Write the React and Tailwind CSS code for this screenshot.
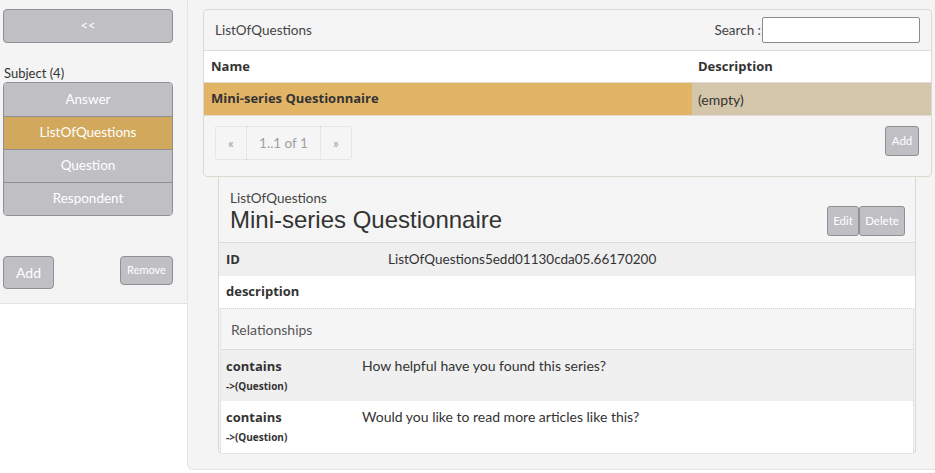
import React from 'react';

const font = "font-['Lato','Open_Sans',sans-serif]";
const bold = "font-['Open_Sans',sans-serif] font-bold";

const subjects = ['Answer', 'ListOfQuestions', 'Question', 'Respondent'];

const relations = [
  { text: 'How helpful have you found this series?', bg: 'bg-[#f0f0f0]' },
  { text: 'Would you like to read more articles like this?', bg: 'bg-white' },
];

export default function App() {
  return (
    <div className={`flex w-[935px] h-[473px] bg-white text-[#333] ${font}`}>
      {/* Sidebar */}
      <div className="w-[187px] shrink-0">
        <div className="h-[304px] bg-[#f4f4f4] border-b border-dotted border-[#d6d6d6] pt-[9px] pl-[3px] pr-[14px]">
          <button className="w-[170px] h-[34px] bg-[#c0bfc4] border border-[#8f8f95] rounded-[4px] text-white text-[13px]">
            &lt;&lt;
          </button>
          <div className="mt-[22px] text-[13px] leading-[16px] text-[#333] pl-[1px]">Subject (4)</div>
          <div className="mt-[1px] w-[170px] border border-[#8f8f95] rounded-[4px] overflow-hidden">
            {subjects.map((s, i) => (
              <div
                key={s}
                className={`h-[33px] flex items-center justify-center text-white text-[13.5px] pb-[1px] ${
                  s === 'ListOfQuestions' ? 'bg-[#d2a85c]' : 'bg-[#c0bfc4]'
                } ${i > 0 ? 'border-t border-[#8f8f95]' : ''}`}
              >
                {s}
              </div>
            ))}
          </div>
          <div className="mt-[40px] flex items-start justify-between">
            <button className="w-[51px] h-[33px] bg-[#c0bfc4] border border-[#8f8f95] rounded-[4px] text-white text-[14px]">
              Add
            </button>
            <button className="w-[53px] h-[29px] bg-[#c0bfc4] border border-[#8f8f95] rounded-[4px] text-white text-[11px]">
              Remove
            </button>
          </div>
        </div>
      </div>

      {/* Main */}
      <div className="w-[748px] h-[470px] bg-[#f4f4f4] border-l border-b border-dotted border-[#d6d6d6] rounded-bl-[6px] pt-[9px] pl-[15px] pr-[4px]">
        <div className="w-[729px] border border-[#ddd9d0] rounded-[4px] bg-[#f5f5f5]">
          {/* Header */}
          <div className="h-[40px] flex items-center justify-between pl-[11px] pr-[11px]">
            <span className="text-[13.5px] text-[#444] pt-[1px]">ListOfQuestions</span>
            <div className="flex items-center">
              <span className="text-[13.5px] text-[#444] mr-[1px]">Search :</span>
              <input className="w-[158px] h-[26px] bg-white border border-[#8a8a8a] rounded-[2px] outline-none" />
            </div>
          </div>
          {/* Table */}
          <div className={`flex h-[33px] items-center bg-white border-t border-b border-[#e0dcd4] text-[13px] text-[#333] ${bold}`}>
            <div className="w-[494px] pl-[7px]">Name</div>
            <div>Description</div>
          </div>
          <div className="flex h-[33px] border-b border-[#e0dcd4] text-[13px] text-[#333]">
            <div className={`w-[488px] bg-[#e2b466] flex items-center pl-[7px] ${bold}`}>Mini-series Questionnaire</div>
            <div className="flex-1 bg-[#d4c6ab] flex items-center pl-[6px] text-[14px]">(empty)</div>
          </div>
          {/* Footer */}
          <div className="h-[60px] flex items-start justify-between pt-[10px] pl-[11px] pr-[12px]">
            <div className="flex h-[34px] text-[13.5px] text-[#a0a0a0]">
              <div className="w-[32px] flex items-center justify-center border border-dotted border-[#d8d8d8] rounded-l-[3px]">«</div>
              <div className="w-[73px] flex items-center justify-center border-y border-dotted border-[#d8d8d8]">1..1 of 1</div>
              <div className="w-[32px] flex items-center justify-center border border-dotted border-[#d8d8d8] rounded-r-[3px]">»</div>
            </div>
            <button className="w-[34px] h-[30px] bg-[#c0bfc4] border border-[#8f8f95] rounded-[3px] text-white text-[11.5px]">
              Add
            </button>
          </div>
        </div>

        {/* Detail panel */}
        <div className="ml-[15px] w-[698px] h-[276px] border-x border-b border-[#ddd9d0] rounded-b-[3px] bg-[#f5f5f5]">
          <div className="h-[66px] flex items-end justify-between border-b border-[#e0dcd4] pl-[11px] pr-[10px] pb-[6px]">
            <div className="pb-[2px]">
              <div className="text-[13.5px] leading-[16px] text-[#444]">ListOfQuestions</div>
              <div className="text-[24px] leading-[28px] text-[#333] font-['Liberation_Sans',Arial,sans-serif]">
                Mini-series Questionnaire
              </div>
            </div>
            <div className="flex">
              <button className="w-[32px] h-[30px] bg-[#c0bfc4] border border-[#8f8f95] rounded-[3px] text-white text-[11.5px]">
                Edit
              </button>
              <button className="w-[46px] h-[30px] bg-[#c0bfc4] border border-[#8f8f95] rounded-[3px] text-white text-[11.5px]">
                Delete
              </button>
            </div>
          </div>
          <div className="h-[33px] flex items-center bg-[#efefef] text-[13px]">
            <div className={`w-[169px] pl-[7px] ${bold}`}>ID</div>
            <div className="text-[13.5px]">ListOfQuestions5edd01130cda05.66170200</div>
          </div>
          <div className="h-[32px] flex items-center bg-white text-[13px]">
            <div className={`pl-[7px] ${bold}`}>description</div>
          </div>
          <div className="mx-[1px] border border-dotted border-[#d8d4cc] rounded-b-[3px] bg-[#f5f5f5]">
            <div className="h-[40px] flex items-center pl-[10px] text-[14px] text-[#555]">Relationships</div>
            {relations.map((r, i) => (
              <div key={i} className={`h-[52px] flex pt-[8px] text-[13px] ${r.bg} ${i === 0 ? 'border-t border-[#e0dcd4]' : ''}`}>
                <div className="w-[141px] pl-[5px]">
                  <div className={`leading-[16px] ${bold}`}>contains</div>
                  <div className={`mt-[6px] text-[10px] leading-[13px] ${bold}`}>-&gt;(Question)</div>
                </div>
                <div className="leading-[16px] text-[14px]">{r.text}</div>
              </div>
            ))}
          </div>
        </div>
      </div>
    </div>
  );
}
